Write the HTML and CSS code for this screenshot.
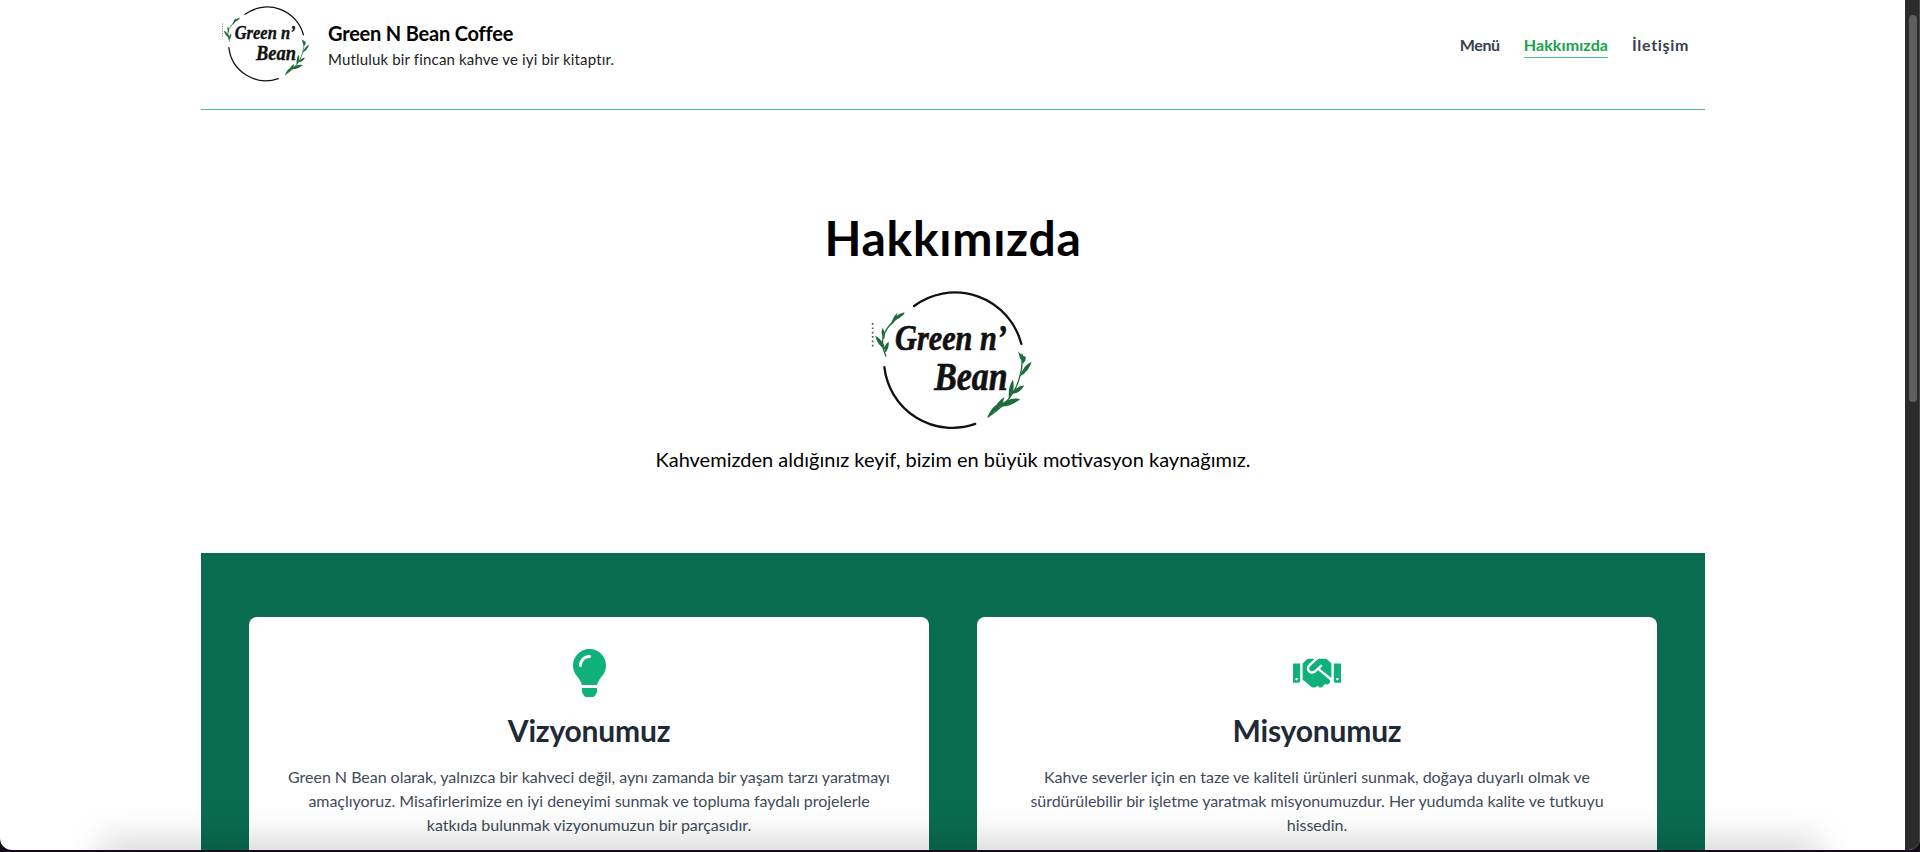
FILE: index.html
```html
<!DOCTYPE html>
<html lang="tr">
<head>
<meta charset="utf-8">
<title>Hakkımızda - Green N Bean Coffee</title>
<link rel="stylesheet" href="styles.css">
</head>
<body>
<svg class="defs" width="0" height="0" aria-hidden="true">
  <defs>
    <symbol id="logo" viewBox="90 50 500 440">
      <path class="ring" d="M222 107 A205 205 0 0 1 543 220"/>
      <path class="ring" d="M133 290 A205 205 0 0 0 405 460"/>
      <path class="stem" d="M138 258 Q118 215 135 185 Q150 155 192 128"/>
      <path class="stem" d="M442 440 Q520 390 538 320 Q548 290 545 250"/>
      <path class="leaf" d="M194 126 Q172 128 160 148 Q182 146 194 126Z M172 128 Q160 135 152 165 Q168 155 172 128Z M128 172 Q120 188 132 208 Q138 190 128 172Z M106 196 Q110 222 136 238 Q132 210 106 196Z M146 214 Q130 222 134 248 Q148 236 146 214Z"/>
      <path class="leaf" d="M533 242 Q538 265 548 280 Q560 268 555 258 Q545 256 533 242Z M574 274 Q552 282 538 318 Q566 304 574 274Z M552 345 Q528 346 512 370 Q538 370 552 345Z M518 328 Q502 350 506 385 Q526 362 518 328Z M540 385 Q505 378 472 408 Q510 412 540 385Z M492 380 Q470 390 462 424 Q488 410 492 380Z M470 402 Q455 410 442 438 Q466 430 470 402Z"/>
      <path class="dots" d="M98 158 V232"/>
      <text class="script script-top" x="165" y="240" textLength="335" lengthAdjust="spacingAndGlyphs">Green n’</text>
      <text class="script script-bottom" x="282" y="358" textLength="220" lengthAdjust="spacingAndGlyphs">Bean</text>
    </symbol>
  </defs>
</svg>
<div class="window">
  <div class="page">
    <header class="site-header">
      <div class="brand">
        <svg class="brand-logo" role="img" aria-label="Green n' Bean"><use href="#logo"/></svg>
        <div class="brand-text">
          <div class="brand-name">Green N Bean Coffee</div>
          <div class="brand-tag">Mutluluk bir fincan kahve ve iyi bir kitaptır.</div>
        </div>
      </div>
      <nav class="nav">
        <a class="nav-link nav-menu" href="#">Menü</a>
        <a class="nav-link active" href="#">Hakkımızda</a>
        <a class="nav-link nav-contact" href="#">İletişim</a>
      </nav>
    </header>
    <section class="hero">
      <h1 class="hero-title">Hakkımızda</h1>
      <svg class="hero-logo" role="img" aria-label="Green n' Bean"><use href="#logo"/></svg>
      <p class="hero-text">Kahvemizden aldığınız keyif, bizim en büyük motivasyon kaynağımız.</p>
    </section>
    <section class="band">
      <article class="card">
        <div class="card-icon">
          <svg class="icon-bulb" viewBox="0 0 352 512">
            <path d="M96.06 454.35c.01 6.29 1.87 12.45 5.36 17.69l17.09 25.69a31.99 31.99 0 0 0 26.64 14.28h61.71a31.99 31.99 0 0 0 26.64-14.28l17.09-25.69a31.989 31.989 0 0 0 5.36-17.69l.04-38.35H96.01l.05 38.35zM0 176c0 44.37 16.45 84.85 43.56 115.78 16.52 18.85 42.36 58.23 52.21 91.45.04.26.07.52.11.78h160.24c.04-.26.07-.51.11-.78 9.85-33.22 35.69-72.6 52.21-91.45C335.55 260.85 352 220.37 352 176 352 78.61 272.91-.3 175.45 0 73.44.31 0 82.97 0 176zm176-80c-44.11 0-80 35.89-80 80 0 8.84-7.16 16-16 16s-16-7.16-16-16c0-61.76 50.24-112 112-112 8.84 0 16 7.16 16 16s-7.16 16-16 16z"/>
          </svg>
        </div>
        <h2 class="card-title">Vizyonumuz</h2>
        <p class="card-text">Green N Bean olarak, yalnızca bir kahveci değil, aynı zamanda bir yaşam tarzı yaratmayı amaçlıyoruz. Misafirlerimize en iyi deneyimi sunmak ve topluma faydalı projelerle katkıda bulunmak vizyonumuzun bir parçasıdır.</p>
      </article>
      <article class="card">
        <div class="card-icon">
          <svg class="icon-hands" viewBox="0 0 640 512">
            <path d="M434.7 64h-85.9c-8 0-15.7 3-21.6 8.4l-98.3 90c-.1.1-.2.3-.3.4-16.6 15.6-16.3 40.5-2.1 56 12.7 13.9 39.4 17.6 56.1 2.7.1-.1.3-.1.4-.2l79.9-73.2c6.5-5.9 16.7-5.5 22.6 1 6 6.5 5.5 16.6-1 22.6l-26.1 23.9L504 313.8c2.9 2.4 5.5 5 7.9 7.7V128l-54.6-54.6c-5.9-6-14.1-9.4-22.6-9.4zM544 128.2v223.9c0 17.7 14.3 32 32 32h64V128.2h-96zm48 223.9c-8.8 0-16-7.2-16-16s7.2-16 16-16 16 7.2 16 16-7.2 16-16 16zM0 384h64c17.7 0 32-14.3 32-32V128.2H0V384zm48-63.9c8.8 0 16 7.2 16 16s-7.2 16-16 16-16-7.2-16-16c0-8.9 7.2-16 16-16zm435.9 18.6L334.6 217.5l-30 27.5c-29.7 27.1-75.2 24.5-101.7-4.4-26.9-29.4-24.8-74.9 4.4-101.7L289.1 64h-83.8c-8.5 0-16.6 3.4-22.6 9.4L128 128v223.9h18.3l90.5 81.9c27.4 22.3 67.7 18.1 90-9.3l.2-.2 17.9 15.5c15.9 13 39.4 10.5 52.3-5.4l31.4-38.6 5.4 4.4c13.7 11.1 33.9 9.1 45-4.7l9.5-11.7c11.2-13.8 9.1-33.9-4.6-45.1z"/>
          </svg>
        </div>
        <h2 class="card-title">Misyonumuz</h2>
        <p class="card-text">Kahve severler için en taze ve kaliteli ürünleri sunmak, doğaya duyarlı olmak ve sürdürülebilir bir işletme yaratmak misyonumuzdur. Her yudumda kalite ve tutkuyu hissedin.</p>
      </article>
    </section>
  </div>
  <div class="scrollbar"><div class="thumb"></div></div>
  <div class="shade"></div>
</div>
</body>
</html>
```
FILE: styles.css
```css
* { box-sizing: border-box; }
html, body { margin: 0; height: 100%; overflow: hidden; background: #140b1e; }
body { font-family: "Lato", "Noto Sans", sans-serif; color: #000; }
.defs { position: absolute; }
.window { position: relative; display: flex; height: 850px; overflow: hidden; background: #fff; border-radius: 0 0 12px 12px; }
.page { flex: 1; min-width: 0; overflow: hidden; padding: 0 200px 0 201px; }
.scrollbar { width: 15px; flex: none; background: #2b2b2b; border-right: 1px solid #4a4a4a; padding: 15px 2px 0 4px; }
.thumb { height: 387px; border-radius: 4px; background: #5f5f5f; }
.shade { position: absolute; left: 110px; right: 110px; bottom: -14px; height: 14px; pointer-events: none; box-shadow: 0 0 34px 10px rgba(0,0,0,.17); }

.site-header { display: flex; align-items: flex-start; justify-content: space-between; height: 110px; padding: 4px 16px 0 20px; border-bottom: 1px solid #4abf8c; }
.brand { display: flex; align-items: center; gap: 16px; }
.brand-logo { display: block; width: 91px; height: 80px; }
.brand-text { display: flex; flex-direction: column; gap: 3px; }
.brand-name { font-size: 20px; line-height: 26px; font-weight: 700; letter-spacing: -.2px; }
.brand-tag { font-size: 15px; line-height: 20px; font-weight: 400; color: #222; letter-spacing: .16px; }
.nav { display: flex; gap: 24px; margin-top: 30px; }
.nav-link { font-size: 16px; line-height: 22px; font-weight: 700; color: #374151; text-decoration: none; border-bottom: 1px solid transparent; padding-bottom: 1px; letter-spacing: .1px; }
.nav-menu { letter-spacing: -.38px; }
.nav-contact { letter-spacing: .67px; }
.nav-link.active { color: #16a34a; border-bottom-color: #4abf8c; }

.hero { display: flex; flex-direction: column; align-items: center; padding-top: 99px; }
.hero-title { margin: 0; font-size: 48px; line-height: 58px; font-weight: 700; letter-spacing: .7px; }
.hero-logo { display: block; width: 167px; height: 147px; margin-top: 20px; }
.hero-text { margin: 11px 0 0; font-size: 20px; line-height: 28px; }

.band { display: grid; grid-template-columns: 1fr 1fr; gap: 48px; margin-top: 80px; padding: 64px 48px; background: #0a6c4f; }
.card { display: flex; flex-direction: column; align-items: center; height: 400px; padding: 32px 36px; background: #fff; border-radius: 8px; text-align: center; }
.card-icon { display: flex; align-items: center; justify-content: center; height: 48px; }
.icon-bulb { display: block; width: 33px; height: 48px; fill: #10b07a; }
.icon-hands { display: block; width: 48px; height: 38.4px; fill: #10b07a; }
.card-title { margin: 15px 0 0; font-size: 30px; line-height: 36px; font-weight: 700; letter-spacing: -.2px; color: #1f2937; }
.card-text { margin: 17px 0 0; font-size: 16px; line-height: 24px; color: #414a59; letter-spacing: -.03px; }

.ring { fill: none; stroke: #111; stroke-width: 7; stroke-linecap: round; }
.leaf { fill: #1e6b3a; }
.stem { fill: none; stroke: #1e6b3a; stroke-width: 4; }
.dots { fill: none; stroke: #555; stroke-width: 5; stroke-dasharray: 5 8; }
.script { font-family: "Liberation Serif", serif; font-style: italic; font-weight: 700; fill: #111; stroke: #111; stroke-width: 2; }
.script-top { font-size: 106px; }
.script-bottom { font-size: 118px; }
```
